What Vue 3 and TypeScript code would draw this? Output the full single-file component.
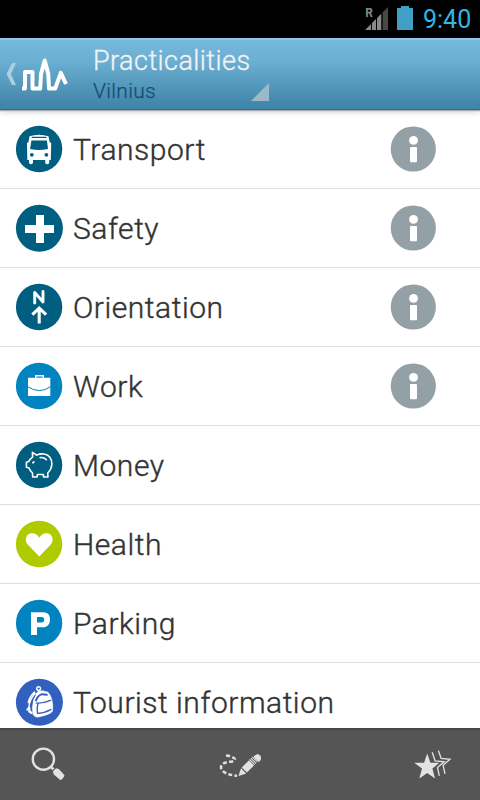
<script setup lang="ts">
type IconName = 'bus' | 'cross' | 'north' | 'briefcase' | 'pig' | 'heart' | 'parking' | 'backpack'

interface Item {
  label: string
  icon: IconName
  color: string
  info: boolean
  radius: number
}

const items: Item[] = [
  { label: 'Transport', icon: 'bus', color: '#005f81', info: true, radius: 23.2 },
  { label: 'Safety', icon: 'cross', color: '#005f81', info: true, radius: 23.5 },
  { label: 'Orientation', icon: 'north', color: '#005f81', info: true, radius: 23.2 },
  { label: 'Work', icon: 'briefcase', color: '#0083be', info: true, radius: 23.2 },
  { label: 'Money', icon: 'pig', color: '#005f81', info: false, radius: 23.2 },
  { label: 'Health', icon: 'heart', color: '#afcb00', info: false, radius: 23.2 },
  { label: 'Parking', icon: 'parking', color: '#0083be', info: false, radius: 23.2 },
  { label: 'Tourist information', icon: 'backpack', color: '#3260bf', info: false, radius: 23.5 },
]
</script>

<template>
  <div class="screen">
    <div class="status">
      <svg class="signal" width="26" height="26" viewBox="0 0 26 26">
        <path d="M1 24 L7 18 V24 Z M8 17 L12 13 V24 H8 Z M13 12 L17.5 7.5 V24 H13 Z" fill="#888" />
        <path d="M18.5 6.5 L24 1 V24 H18.5 Z" fill="#484848" />
        <path d="M7.5 17 V24 M12.5 12 V24 M18 7 V24" stroke="#000" stroke-width=".8" />
        <text x="1.2" y="11.2" class="roaming">R</text>
      </svg>
      <svg class="battery" width="16" height="24" viewBox="0 0 16 24">
        <path d="M0 2 H4 V0 H12 V2 H16 V24 H0 Z" fill="#409fc6" />
      </svg>
      <span class="clock">9:40</span>
    </div>

    <header class="bar">
      <svg class="back" width="70" height="48" viewBox="0 0 70 48">
        <path d="M12 13 H16 L11 24 L16 35 H12 L6.5 24 Z" fill="#abcfe1" />
        <path
          d="M22 38.6 H25 V22 H32.5 V38.6 H40.2 L41 24 L44.7 10.5 L48.3 24 L49 38.6 H55.2 L60.8 22.8 L66 34"
          fill="none" stroke="#fff" stroke-width="4" stroke-linejoin="round"
        />
      </svg>
      <div class="titles">
        <div class="title">Practicalities</div>
        <div class="subtitle">Vilnius</div>
      </div>
      <svg class="spinner" width="18" height="18" viewBox="0 0 18 18">
        <path d="M18 0 V18 H0 Z" fill="#9bbac8" />
      </svg>
    </header>

    <main class="list">
      <div v-for="item in items" :key="item.label" class="row">
        <svg class="badge" width="48" height="48" viewBox="0 0 48 48">
          <circle :cx="item.radius + 0.9" :cy="item.radius + 0.8" :r="item.radius" :fill="item.color" />
          <g v-if="item.icon === 'bus'">
            <path
              d="M14.5 11.2 Q24 8.2 33.5 11.2 L34.6 17 L36.2 18 L35.8 35 H34.2 V38 Q32.2 40.4 30.2 38 V35 H18 V38 Q16 40.4 14 38 V35 H12.3 L12 18 L13.5 17 Z"
              fill="#fff"
            />
            <path d="M17.2 12.4 H31" :stroke="item.color" stroke-width="1.2" stroke-linecap="round" />
            <path d="M16.4 15.6 H31.9 L33 24 Q24 26 15.1 24 Z" :fill="item.color" />
            <circle cx="16.8" cy="29.8" r="1.9" :fill="item.color" />
            <circle cx="31.4" cy="29.8" r="1.9" :fill="item.color" />
          </g>
          <path
            v-else-if="item.icon === 'cross'"
            d="M21 11 H29 V21 H39 V29 H29 V39 H21 V29 H10 V21 H21 Z"
            fill="#fff"
          />
          <g v-else-if="item.icon === 'north'" fill="none" stroke="#fff">
            <path d="M19.7 20 V9.4 L28 19 V8.4" stroke-width="2.9" stroke-linejoin="round" stroke-linecap="round" />
            <path d="M24.2 40.6 V26 M17.3 31.7 L24.2 25.1 L31.1 31.7" stroke-width="3.1" />
          </g>
          <g v-else-if="item.icon === 'briefcase'">
            <path d="M13 15.8 H20 V13 H29 V15.8 H35.3 V34 H13 Z M21.5 15.8 H27.5 V14.5 H21.5 Z" fill="#fff" fill-rule="evenodd" />
            <path d="M12.6 24.6 Q24.2 32.5 35.7 24.6" fill="none" :stroke="item.color" stroke-width="1" />
          </g>
          <g v-else-if="item.icon === 'pig'" fill="none" stroke="#fff" stroke-width="1.6" stroke-linejoin="round" stroke-linecap="round">
            <path
              d="M17.4 11.4 L21.7 14.1 Q25 12.5 29 13 C34 13.5 37 18 36.8 23 C36.7 27.5 34.8 30 32.7 32 L33 36 H28.5 V33.5 H22.3 L22.1 36 H17.7 L17.5 32 Q15 30 14 27.1 L11.4 26.3 V21.2 L13.8 20.4 Q15 18 17.6 16.2 Z"
            />
            <path d="M25.2 16.6 Q29 16.1 31.4 18.7" />
            <path d="M17.8 21.8 L18.9 20.8" />
          </g>
          <path
            v-else-if="item.icon === 'heart'"
            d="M24.3 36.4 L12.7 24.6 C9.5 21.1 10.4 15.1 15 13.6 C19 12.4 22.7 14.4 24.3 17.7 C26 14.4 29.5 12.4 33.4 13.6 C38 15.1 39 21.1 35.8 24.6 Z"
            fill="#fff"
          />
          <path
            v-else-if="item.icon === 'parking'"
            d="M16 13.2 H27.8 C32.5 13.2 35 15.7 35 20.4 C35 25.2 32.5 28.2 27.8 28.2 H22 V36 H16 Z M22 18 V23.5 H26.6 Q29.2 23.5 29.2 20.8 Q29.2 18 26.6 18 Z"
            fill="#fff" fill-rule="evenodd"
          />
          <g v-else fill="none" stroke="#fff" stroke-linejoin="round" stroke-linecap="round">
            <circle cx="23.6" cy="10.6" r="1.9" stroke-width="1.4" />
            <path
              d="M18.2 36.5 C16.6 29 17.6 20.5 21.6 14.8 Q23 13 27.4 12.8 L33 14.2 C36.7 18 38.6 27 37.4 33.4 Q34 37 22.4 39.2 Q19 38.8 18.2 36.5 Z"
              fill="#fff" stroke-width=".6"
            />
            <path d="M19.5 14 Q14.5 18.5 13.3 24.5 M20 15.5 Q14.2 22 14 29 L12 32" stroke-width="1.5" />
            <path d="M14.2 30 L14.4 33.5 L16.4 34.8" stroke-width="2.4" />
            <path d="M16.4 29.5 Q16.7 21.5 20.2 17" :stroke="item.color" stroke-width="1" />
            <path d="M21 22.6 Q22.6 17.4 27 16.2 L31.8 16.8" :stroke="item.color" stroke-width="1.9" />
            <path d="M21.4 25.1 Q28 25.5 35.6 22.4 M22.9 26 Q21.5 30 22.5 35.4 Q29 35.3 35.8 31.6" :stroke="item.color" stroke-width="1.4" />
          </g>
        </svg>
        <span class="label">{{ item.label }}</span>
        <svg v-if="item.info" class="info" width="46" height="46" viewBox="0 0 46 46">
          <circle cx="23.3" cy="23" r="22.6" fill="#93a1a7" />
          <circle cx="23.5" cy="14.4" r="4.4" fill="#fff" />
          <rect x="20" y="21" width="7" height="15.3" rx="1" fill="#fff" />
        </svg>
      </div>
    </main>

    <footer class="tools">
      <svg width="40" height="40" viewBox="0 0 40 40">
        <circle cx="15.4" cy="15.2" r="10.6" fill="none" stroke="#e2e2e2" stroke-width="2.4" />
        <path d="M22.7 22.7 L25.5 25.4" stroke="#e2e2e2" stroke-width="2.6" />
        <path d="M25 27.3 L28 24.2 L30.8 25 L36.5 31.3 Q35.7 34.7 32.5 36.3 L25.6 30.2 Z" fill="#e2e2e2" />
      </svg>
      <svg width="44" height="40" viewBox="0 0 44 40">
        <path
          d="M8 11.5 C16 12.5 20 15.8 14 17.5 C8 18 3 19.3 3 23.5 C3.5 28 10 31 19 31.8"
          fill="none" stroke="#e2e2e2" stroke-width="2.5" stroke-dasharray="4 2.3"
        />
        <path d="M20.4 32 L23 24.3 L28.2 29.4 Z M23.8 23.4 L30.8 16.4 L36 21.4 L28.9 28.5 Z M36.7 11.6 L39.6 10 Q44.4 11.5 42.5 16.2 L40.9 17.9 L35.5 13 Z" fill="#e2e2e2" />
        <path d="M31.4 15.5 L36.7 20.6 M32.8 14.2 L38.1 19.3 M34.2 12.8 L39.5 17.9" stroke="#e2e2e2" stroke-width="1.1" />
      </svg>
      <svg width="40" height="40" viewBox="0 0 40 40">
        <path d="M15.2 9.5 L18.4 18.7 H27.3 L20.4 24.4 L23 34.5 L15.2 29 L7.3 34.5 L10 24.4 L2.2 18.7 H12.1 Z" fill="#e2e2e2" />
        <path d="M20.2 8.2 L23.1 16.8 L32.2 17.8 L25.5 23.4 L27.3 31.8 M26.4 6.7 L29.2 14.5 L38 15.3 L31.1 21.3 L33 29.8" fill="none" stroke="#e2e2e2" stroke-width="1.3" />
      </svg>
    </footer>
  </div>
</template>

<style>
body {
  margin: 0;
  overflow: hidden;
}
</style>

<style scoped>
.screen {
  width: 480px;
  height: 800px;
  display: flex;
  flex-direction: column;
  overflow: hidden;
  background: #fff;
  font-family: Roboto, "Liberation Sans", sans-serif;
}
svg {
  display: block;
  flex: none;
}
.status {
  height: 38px;
  flex: none;
  display: flex;
  align-items: flex-start;
  background: #000;
  padding-left: 364px;
}
.signal {
  margin-top: 6px;
}
.roaming {
  font-size: 12px;
  font-weight: 700;
  fill: #888;
}
.battery {
  margin: 6px 0 0 7px;
}
.clock {
  margin: 5px 0 0 10px;
  font-size: 25px;
  line-height: 30px;
  color: #33b5e5;
  white-space: nowrap;
}
.bar {
  height: 72px;
  box-sizing: border-box;
  flex: none;
  display: flex;
  align-items: flex-start;
  background: linear-gradient(#75b8dc, #6bafd2 30%, #4489ad 90%, #3d86ab);
  border-top: 2px solid #8bc9e8;
  border-bottom: 1px solid #2d6f90;
  position: relative;
  z-index: 1;
  box-shadow: 0 1px 1px #aaa, 0 2px 6px rgba(0, 0, 0, 0.18);
}
.back {
  margin-top: 10px;
}
.titles {
  width: 181px;
  padding: 5px 0 0 23px;
  box-sizing: border-box;
}
.title {
  font-size: 27px;
  line-height: 32px;
  font-weight: 300;
  letter-spacing: 0.45px;
  -webkit-text-stroke: 0.35px #f2f2f2;
  color: #f2f2f2;
  white-space: nowrap;
}
.subtitle {
  padding-top: 1px;
  font-size: 21px;
  line-height: 26px;
  font-weight: 300;
  letter-spacing: 0.3px;
  -webkit-text-stroke: 0.25px #164e6c;
  color: #164e6c;
}
.spinner {
  margin-top: 43px;
}
.list {
  flex: 1;
  min-height: 0;
  overflow: hidden;
}
.row {
  height: 79px;
  box-sizing: border-box;
  display: flex;
  align-items: center;
  border-bottom: 1px solid #dedede;
  padding: 0 44px 0 15px;
}
.label {
  flex: 1;
  margin-left: 10px;
  padding-top: 2px;
  font-size: 30px;
  line-height: 36px;
  font-weight: 300;
  letter-spacing: 0.54px;
  -webkit-text-stroke: 0.4px #333;
  color: #333;
  white-space: nowrap;
}
.tools {
  height: 72px;
  box-sizing: border-box;
  flex: none;
  display: flex;
  justify-content: space-between;
  align-items: flex-start;
  padding: 14px 28px 0;
  background: #555;
  border-top: 2px solid #484848;
}
</style>
